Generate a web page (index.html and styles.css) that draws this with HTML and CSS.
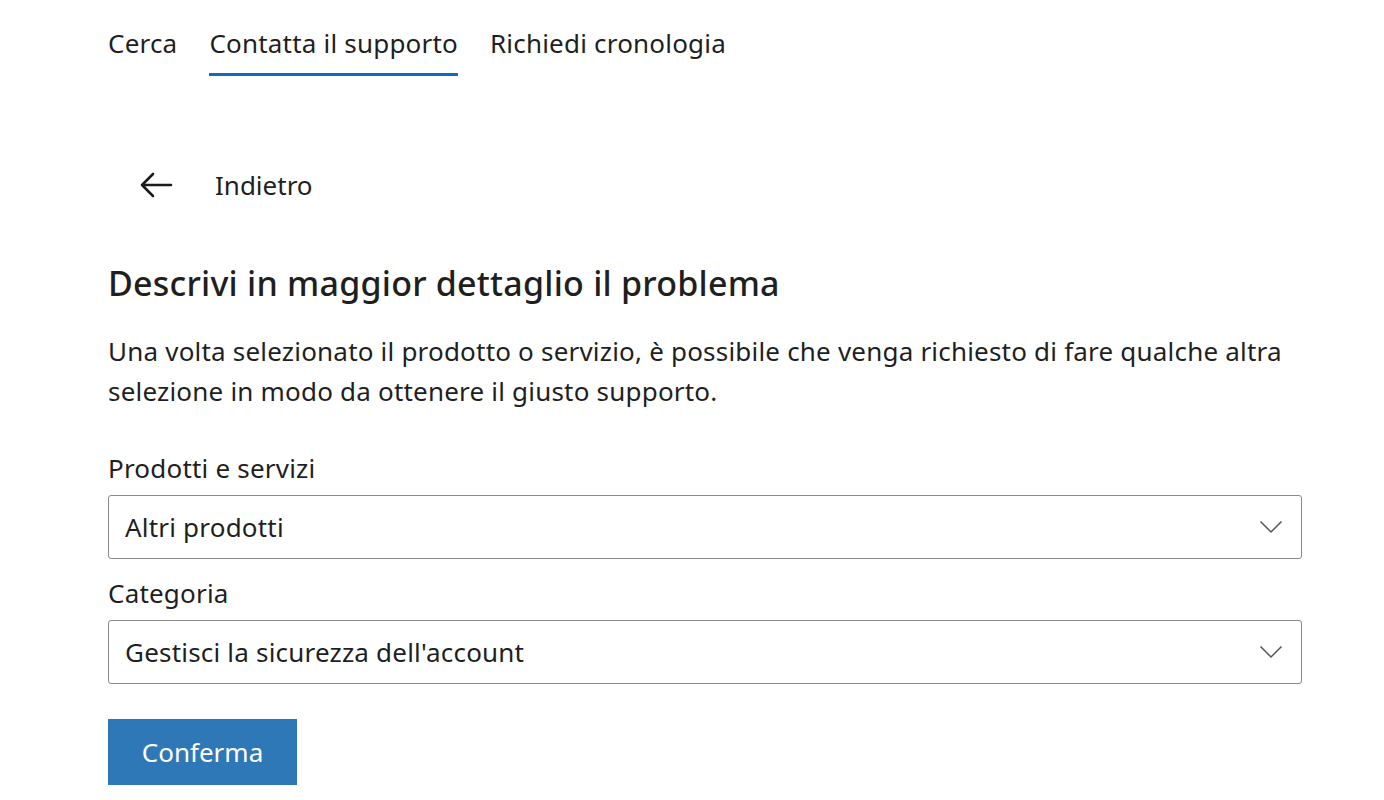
FILE: index.html
```html
<!DOCTYPE html>
<html lang="it">
<head>
<meta charset="utf-8">
<title>Contatta il supporto</title>
<link rel="stylesheet" href="styles.css">
</head>
<body>
<div class="page">
  <nav class="tabs">
    <a class="tab">Cerca</a>
    <a class="tab active">Contatta il supporto</a>
    <a class="tab">Richiedi cronologia</a>
  </nav>
  <div class="back">
    <svg class="back-icon" width="34" height="26" viewBox="0 0 34 26" aria-hidden="true">
      <path d="M32 13H3M14 2L3 13l11 11" fill="none" stroke="#1b1b1b" stroke-width="2.6" stroke-linecap="round" stroke-linejoin="round"/>
    </svg>
    <span class="back-label">Indietro</span>
  </div>
  <h1 class="title">Descrivi in maggior dettaglio il problema</h1>
  <p class="desc">Una volta selezionato il prodotto o servizio, è possibile che venga richiesto di fare qualche altra selezione in modo da ottenere il giusto supporto.</p>
  <div class="field">
    <label class="label">Prodotti e servizi</label>
    <div class="select"><span>Altri prodotti</span>
      <svg class="chev" width="24" height="14" viewBox="0 0 24 14" aria-hidden="true"><path d="M1.5 1.5L12 12 22.5 1.5" fill="none" stroke="#555" stroke-width="1.5"/></svg>
    </div>
  </div>
  <div class="field">
    <label class="label">Categoria</label>
    <div class="select"><span>Gestisci la sicurezza dell'account</span>
      <svg class="chev" width="24" height="14" viewBox="0 0 24 14" aria-hidden="true"><path d="M1.5 1.5L12 12 22.5 1.5" fill="none" stroke="#555" stroke-width="1.5"/></svg>
    </div>
  </div>
  <button class="btn">Conferma</button>
</div>
</body>
</html>
```
FILE: styles.css
```css
* { box-sizing: border-box; }
html, body { margin: 0; padding: 0; background: #fff; }
body {
  font-family: "Noto Sans", "Open Sans", sans-serif;
  color: #1f1f1f;
  letter-spacing: 0.2px;
}
.page {
  padding: 21px 0 0 108px;
  width: 1302px;
}
.tabs {
  display: flex;
  gap: 32px;
}
.tab {
  font-size: 26px;
  line-height: 44px;
  padding-bottom: 8px;
  border-bottom: 3px solid transparent;
}
.tab.active { border-bottom-color: #0f6cbd; }
.back {
  display: flex;
  align-items: center;
  margin-top: 94px;
  padding-left: 31px;
  gap: 42px;
  height: 30px;
}
.back-icon { display: block; }
.back-label { font-size: 26px; letter-spacing: 0; }
.title {
  margin: 63px 0 0;
  font-size: 34px;
  font-weight: 500;
  line-height: 40px;
  letter-spacing: 0.22px;
}
.desc {
  margin: 28px 0 0;
  font-size: 26px;
  line-height: 40px;
  max-width: 1195px;
}
.desc + .field { margin-top: 38px; }
.label {
  display: block;
  font-size: 26px;
  line-height: 38px;
  margin-bottom: 8px;
}
.field + .field .label { margin-top: 15px; }
.select {
  display: flex;
  align-items: center;
  justify-content: space-between;
  height: 64px;
  border: 1.5px solid #8a8a8a;
  border-radius: 3px;
  padding: 0 18px 0 16px;
  font-size: 26px;
}
.chev { display: block; }
.btn {
  display: block;
  margin-top: 35px;
  width: 189px;
  height: 66px;
  border: 0;
  background: #2f78b8;
  color: #fff;
  font-family: inherit;
  font-size: 26px;
  letter-spacing: 0;
}
```
